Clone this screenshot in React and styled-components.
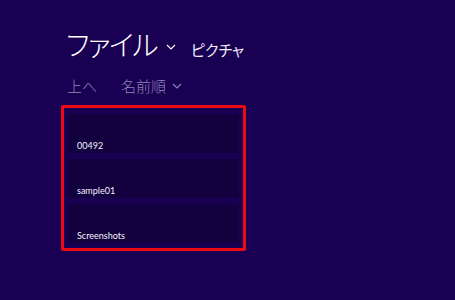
import styled, { createGlobalStyle } from "styled-components";

const GlobalStyle = createGlobalStyle`
  body {
    margin: 0;
    background: #1a0053;
    font-family: "Noto Sans", "Noto Sans CJK JP", sans-serif;
  }
`;

const Page = styled.div`
  width: 455px;
  height: 300px;
  box-sizing: border-box;
  padding: 26px 0 0 61px;
  background: #1a0053;
  color: #fff;
`;

const Header = styled.div`
  display: flex;
  align-items: baseline;
  margin-left: 5px;
`;

const Title = styled.h1`
  margin: 0;
  font-size: 28px;
  font-weight: 300;
  line-height: 36px;
  font-family: "Noto Sans CJK JP", sans-serif;
  font-feature-settings: "palt";
  letter-spacing: -1.5px;
`;

const Chevron = styled.svg`
  width: ${(p) => p.$size}px;
  height: ${(p) => p.$size}px;
  margin: 0 ${(p) => p.$gap}px 0 ${(p) => p.$left}px;
  align-self: center;
  position: relative;
  top: ${(p) => p.$top}px;
`;

const Subtitle = styled.span`
  font-size: 15px;
  font-weight: 400;
  font-family: "Noto Sans CJK JP", sans-serif;
  font-feature-settings: "palt";
  color: #f0eef8;
`;

const SortBar = styled.div`
  display: flex;
  align-items: center;
  gap: 24px;
  margin: 12px 0 0 6px;
  height: 22px;
  color: #8d84b6;
  font-size: 15px;
  font-weight: 300;
  font-family: "Noto Sans CJK JP", sans-serif;
`;

const SortItem = styled.span`
  display: flex;
  align-items: center;
`;

const Selection = styled.div`
  width: 185px;
  box-sizing: border-box;
  margin-top: 9px;
  border: 3px solid #ee0a12;
  border-radius: 2px;
  padding: 6px 4px 5px 4px;
  display: flex;
  flex-direction: column;
  gap: 6px;
`;

const Folder = styled.div`
  height: 39px;
  background: #12003f;
  display: flex;
  align-items: flex-end;
  padding: 0 0 2px 9px;
  box-sizing: border-box;
  font-family: Lato, "Noto Sans", sans-serif;
  font-size: 9px;
  color: #f4f2fa;
`;

const ChevronIcon = (props) => (
  <Chevron viewBox="0 0 10 6" {...props}>
    <path d="M1 1 L5 5 L9 1" fill="none" stroke="currentColor" strokeWidth="1.1" />
  </Chevron>
);

const folders = ["00492", "sample01", "Screenshots"];

export default function App() {
  return (
    <>
      <GlobalStyle />
      <Page>
        <Header>
          <Title>ファイル</Title>
          <ChevronIcon $size={10} $gap={15} $left={9} $top={3} />
          <Subtitle>ピクチャ</Subtitle>
        </Header>
        <SortBar>
          <SortItem>上へ</SortItem>
          <SortItem>
            名前順
            <ChevronIcon $size={10} $gap={0} $left={6} $top={1} />
          </SortItem>
        </SortBar>
        <Selection>
          {folders.map((name) => (
            <Folder key={name}>{name}</Folder>
          ))}
        </Selection>
      </Page>
    </>
  );
}
